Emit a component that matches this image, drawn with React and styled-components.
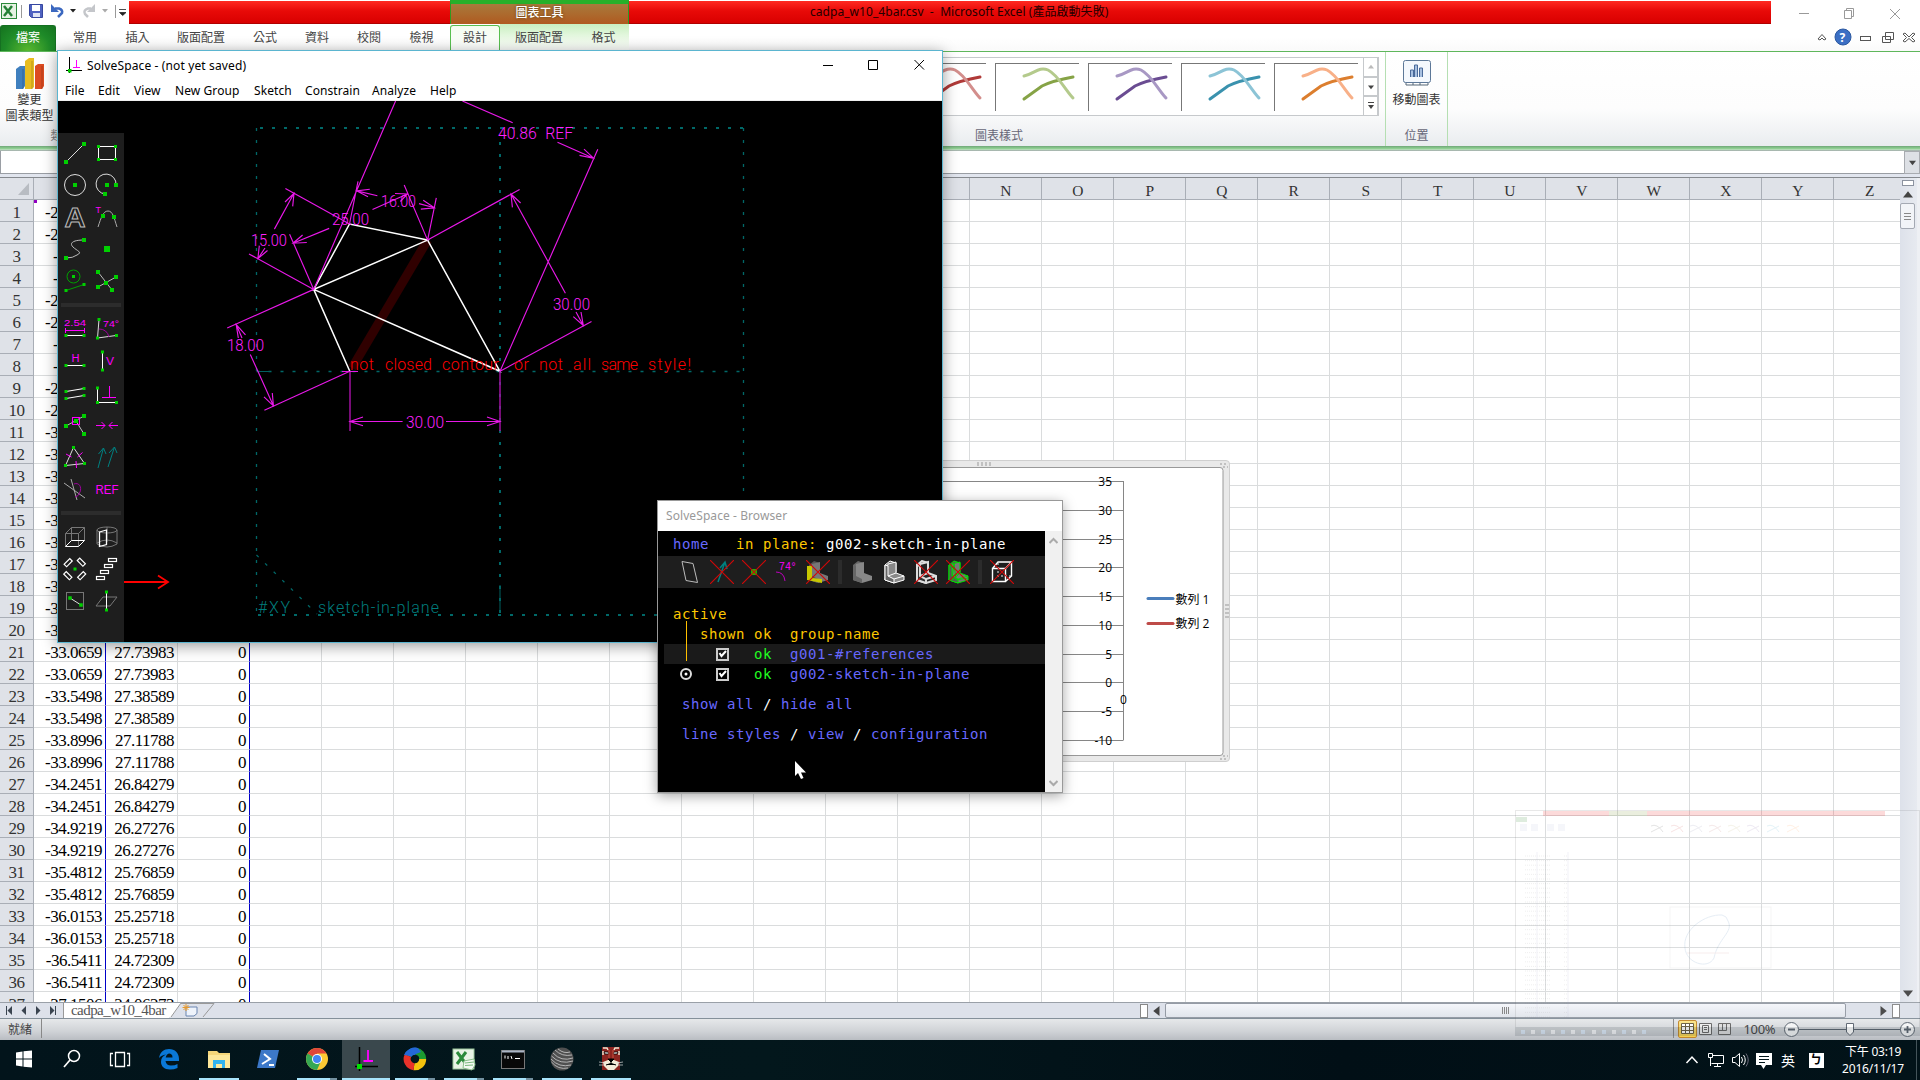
import React from 'react';
import styled, { createGlobalStyle, css } from 'styled-components';

const cjk = '"Noto Sans", "Noto Sans CJK TC", sans-serif';
const serif = '"Liberation Serif", "Noto Sans CJK TC", serif';
const mono = '"DejaVu Sans Mono", monospace';
const G = '#00d000';
const M = '#ff00ff';

const Global = createGlobalStyle`
  * { box-sizing: border-box; }
  html, body { margin: 0; background: #fff; overflow: hidden; }
  svg { display: block; flex: none; }
`;

const Desktop = styled.div`
  position: relative;
  width: 1920px;
  height: 1080px;
  overflow: hidden;
  display: flex;
  flex-direction: column;
  font-family: ${cjk};
  font-size: 12px;
  white-space: nowrap;
  background: #fff;
`;

/* ---------- Excel title and ribbon ---------- */
const TitleRow = styled.div`
  height: 24px;
  flex: none;
  display: flex;
  background: #fff;
`;
const Quick = styled.div`
  width: 129px;
  display: flex;
  align-items: center;
`;
const RedBar = styled.div`
  width: ${p => p.$w}px;
  margin-top: 1px;
  background: linear-gradient(#ff2a22, #e80a08 45%, #d90000);
  border-bottom: 1px solid #b00000;
  color: #240000;
  line-height: 22px;
  padding-left: ${p => p.$pad || 0}px;
  letter-spacing: 0.05px;
`;
const ToolsTab = styled.div`
  width: 179px;
  border-top: 4px solid #27b02a;
  border-left: 1px solid #2f9a20;
  border-right: 1px solid #2f9a20;
  background: linear-gradient(#a87a3c, #b05a20);
  color: #fff;
  font-weight: 500;
  text-align: center;
  line-height: 17px;
  text-shadow: 0 0 3px #5c3a10;
`;
const WinButtons = styled.div`
  flex: 1;
  display: flex;
  justify-content: flex-end;
  padding: 4px 19px 0 0;
`;
const TabRow = styled.div`
  height: 27px;
  flex: none;
  display: flex;
  color: #444;
  background: linear-gradient(#fff 50%, #fafafa);
`;
const FileTab = styled.div`
  width: 56px;
  margin-top: 1px;
  border-radius: 3px 3px 0 0;
  background: radial-gradient(ellipse at 50% 100%, #59b82f, #1e8a28 60%, #15731f);
  border: 1px solid #157021;
  border-bottom: 0;
  color: #fff;
  text-align: center;
  line-height: 24px;
`;
const Tab = styled.div`
  width: ${p => p.$w}px;
  text-align: center;
  line-height: 27px;
  ${p => p.$green && css`background: linear-gradient(#c9efc0, #eefaea 60%, #fff);`}
  ${p => p.$on && css`
    background: linear-gradient(#f4fcf0, #fff);
    border: 1px solid #58bf50;
    border-bottom: 0;
    border-radius: 3px 3px 0 0;
    margin-top: 1px;
    line-height: 24px;
  `}
`;
const TabTools = styled.div`
  flex: 1;
  display: flex;
  justify-content: flex-end;
  align-items: center;
  padding: 0 2px 2px 0;
`;
const Ribbon = styled.div`
  height: 95px;
  flex: none;
  display: flex;
  border-top: 1px solid #5fb75c;
  background: linear-gradient(#fff, #fdfdfd 60%, #e9ecef);
  color: #333;
`;
const Group = styled.div`
  width: ${p => p.$w}px;
  padding-top: ${p => p.$top}px;
  display: flex;
  flex-direction: column;
  align-items: ${p => p.$align || 'center'};
  ${p => p.$lines && css`
    border-left: 1px solid #b5dfb2;
    border-right: 1px solid #b5dfb2;
  `}
`;
const Label = styled.div`
  line-height: 16px;
  color: ${p => p.$c || '#333'};
  margin-top: ${p => p.$mt || 0}px;
  margin-left: ${p => p.$ml || 0}px;
`;
const Gallery = styled.div`
  width: 480px;
  height: 59px;
  margin-left: 840px;
  border: 1px solid #c6c9cc;
  background: #fff;
  display: flex;
  padding-top: 5px;
`;
const StyleItem = styled.div`
  width: 84px;
  height: 48px;
  margin-left: ${p => p.$ml}px;
  border-top: 1px solid #777;
  border-left: 1px solid #777;
`;
const GalleryScroll = styled.div`
  width: 15px;
  height: 59px;
  display: flex;
  flex-direction: column;
  margin: -6px 0 0 auto;
`;
const GalleryBtn = styled.div`
  flex: 1;
  border: 1px solid #c6c9cc;
  display: flex;
  align-items: center;
  justify-content: center;
`;
const GreenBand = styled.div`
  height: 5px;
  flex: none;
  background: linear-gradient(#6fa778, #8fcf92 50%, #c4dfc8 80%, #8b9096);
`;
const FormulaBar = styled.div`
  height: 27px;
  flex: none;
  background: #e1e5ee;
  border-bottom: 1px solid #85898e;
  display: flex;
  align-items: flex-start;
`;
const FormulaInput = styled.div`
  flex: 1;
  height: 23px;
  background: #fff;
  border-bottom: 1px solid #9a9ea4;
  border-left: 1px solid #9a9ea4;
`;
const FormulaDrop = styled.div`
  width: 16px;
  height: 23px;
  background: #dde0e5;
  border: 1px solid #a8abb0;
  display: flex;
  align-items: center;
  justify-content: center;
`;

/* ---------- worksheet ---------- */
const SheetArea = styled.div`
  height: 824px;
  flex: none;
  display: flex;
`;
const Sheet = styled.div`
  width: 1900px;
  overflow: hidden;
  font-family: ${serif};
  font-size: 17px;
  letter-spacing: -0.5px;
`;
const GridRow = styled.div`
  display: flex;
  width: 1906px;
  height: 22px;
`;
const Head = styled.div`
  width: ${p => (p.$corner ? 34 : 72)}px;
  flex: none;
  height: 22px;
  background: #dfe2e8;
  border-right: 1px solid #a9aeb6;
  border-bottom: 1px solid #a9aeb6;
  color: #333;
  text-align: center;
  font-size: 15.5px;
  line-height: 25px;
  ${p => p.$corner && css`
    display: flex;
    align-items: flex-end;
    justify-content: flex-end;
    padding: 0 4px 4px 0;
  `}
`;
const RowHead = styled(Head)`
  width: 34px;
  font-size: 17px;
`;
const Cell = styled.div`
  width: 72px;
  flex: none;
  height: 22px;
  padding-right: 3px;
  text-align: right;
  line-height: 25px;
  color: #000;
  border-right: 1px solid ${p => (p.$blue ? '#0000c8' : '#dadcdd')};
  border-bottom: 1px solid #dadcdd;
`;
const VScroll = styled.div`
  width: 20px;
  background: linear-gradient(90deg, #dde1ea, #e7eaf0);
  border-right: 3px solid #eef0f4;
  display: flex;
  flex-direction: column;
  align-items: center;
  padding: 2px 2px 4px 0;
`;
const SplitBox = styled.div`
  width: 12px;
  height: 6px;
  border: 1px solid #8c93a0;
  background: #fff;
`;
const VThumb = styled.div`
  width: 15px;
  height: 26px;
  margin-top: 3px;
  border: 1px solid #a4a9b3;
  border-radius: 2px;
  background: #f2f4f8;
  display: flex;
  align-items: center;
  justify-content: center;
`;
const VArrow = styled.div`
  margin-top: ${p => (p.$last ? 'auto' : '4px')};
`;
const SheetBar = styled.div`
  height: 17px;
  flex: none;
  display: flex;
  align-items: stretch;
  background: #dde1ea;
  border-top: 1px solid #9aa0a8;
  border-bottom: 1px solid #84909a;
`;
const SheetTab = styled.div`
  width: 106px;
  padding-left: 7px;
  background: #fff;
  font-family: ${serif};
  font-size: 15px;
  line-height: 14px;
  letter-spacing: -0.55px;
  color: #555;
  border-left: 1px solid #999;
`;
const HScroll = styled.div`
  margin-left: auto;
  width: 780px;
  display: flex;
  align-items: center;
`;
const HThumb = styled.div`
  width: 681px;
  height: 15px;
  border: 1px solid #959ba5;
  border-radius: 2px;
  background: linear-gradient(#f4f6fa, #e1e5ec);
  display: flex;
  justify-content: center;
  align-items: center;
`;
const HBox = styled.div`
  width: 8px;
  height: 14px;
  border: 1px solid #888;
  background: #fff;
`;
const Gap = styled.div`
  width: ${p => p.$w}px;
  display: flex;
  justify-content: ${p => (p.$end ? 'flex-end' : 'center')};
  padding-right: ${p => (p.$end ? 4 : 0)}px;
`;
const Status = styled.div`
  height: 21px;
  flex: none;
  display: flex;
  align-items: center;
  background: linear-gradient(#e6e8ea, #cfd2d6 60%, #b9bdc2);
  color: #444;
  padding: 0 0 2px 8px;
`;
const StatusSep = styled.div`
  width: 1px;
  height: 19px;
  background: #888;
  margin-left: ${p => p.$ml}px;
`;
const ViewBtn = styled.div`
  width: 19px;
  height: 18px;
  display: flex;
  align-items: center;
  justify-content: center;
  border: 1px solid ${p => (p.$on ? '#c2872a' : 'transparent')};
  border-radius: 2px;
  background: ${p => (p.$on ? 'linear-gradient(#fbe48a, #f3cf4e)' : 'none')};
`;
const Zoom = styled.div`
  width: 46px;
  text-align: center;
  font-size: 13px;
  letter-spacing: -0.3px;
`;

/* ---------- taskbar ---------- */
const Taskbar = styled.div`
  height: 40px;
  flex: none;
  display: flex;
  background: linear-gradient(90deg, #02141b, #03171c 40%, #010f16 70%, #021319);
  color: #fff;
`;
const TaskItem = styled.div`
  width: ${p => p.$w}px;
  height: 40px;
  margin-left: ${p => p.$ml || 0}px;
  display: flex;
  align-items: center;
  justify-content: center;
  border-bottom: 2px solid transparent;
  background: ${p => (p.$on ? '#3a484d' : 'none')};
  ${p => p.$run && css`border-image: linear-gradient(90deg, #a8e4fb ${p.$stack ? 80 : 100}%, #7391a0 0) 2;`}
`;
const Tray = styled.div`
  margin-left: auto;
  display: flex;
  align-items: center;
`;
const TrayItem = styled.div`
  width: 24px;
  display: flex;
  justify-content: center;
`;
const Clock = styled.div`
  width: 86px;
  margin-left: 2px;
  text-align: center;
  line-height: 17px;
  letter-spacing: -0.2px;
`;
const ImeMark = styled.span`
  font-size: 14px;
`;
const ImeBox = styled.div`
  width: 15px;
  height: 15px;
  background: #fff;
  color: #000;
  font-size: 12px;
  font-weight: 700;
  line-height: 14px;
  text-align: center;
`;
const ShowDesktop = styled.div`
  width: 4px;
  height: 40px;
  border-left: 1px solid #44545a;
`;

/* ---------- floating windows ---------- */
const SolveWindow = styled.div`
  position: absolute;
  left: 57px;
  top: 50px;
  width: 886px;
  height: 593px;
  border: 1px solid #5bb5d0;
  background: #fff;
  box-shadow: 0 3px 14px rgba(0, 0, 0, 0.4);
  color: #000;
`;
const SolveTitle = styled.div`
  height: 28px;
  display: flex;
  align-items: center;
  padding-left: 8px;
`;
const TitleText = styled.span`
  margin-left: 5px;
  letter-spacing: 0.13px;
`;
const SolveButtons = styled.div`
  margin-left: auto;
  padding-right: 17px;
`;
const Menu = styled.div`
  height: 22px;
  padding-left: 7px;
  display: flex;
  line-height: 24px;
  letter-spacing: 0.08px;
  border-bottom: 1px solid #f0f0f0;
`;
const MenuItem = styled.div`
  width: ${p => p.$w}px;
`;
const Canvas = styled.div`
  position: relative;
  height: 541px;
  background: #000;
`;
const Palette = styled.div`
  position: absolute;
  left: 0;
  top: 32px;
  width: 66px;
  height: 509px;
  background: #1e1e1e;
  padding: 4px 1px;
`;
const PaletteGrid = styled.div`
  display: grid;
  grid-template-columns: 32px 32px;
  grid-auto-rows: 32px;
  place-items: center;
`;
const PaletteSep = styled.div`
  height: 4px;
  margin: 6px 2px;
  background: #2c2c2c;
`;
const Browser = styled.div`
  position: absolute;
  left: 657px;
  top: 500px;
  width: 406px;
  height: 293px;
  border: 1px solid #999;
  background: #000;
  box-shadow: 0 3px 12px rgba(0, 0, 0, 0.35);
`;
const BrowserTitle = styled.div`
  height: 30px;
  background: #fff;
  color: #999;
  padding-left: 8px;
  line-height: 30px;
  letter-spacing: 0.08px;
`;
const BrowserBody = styled.div`
  height: 261px;
  display: flex;
`;
const BrowserText = styled.div`
  position: relative;
  width: 387px;
  font-family: ${mono};
  font-size: 14px;
  letter-spacing: 0.571px;
  color: #fff;
`;
const TextLine = styled.div`
  height: ${p => p.$h}px;
  line-height: ${p => p.$lh || p.$h}px;
  padding-left: 15px;
  white-space: pre;
  margin-top: ${p => p.$mt || 0}px;
`;
const GroupRow = styled.div`
  height: 20px;
  line-height: 20px;
  margin-left: 6px;
  padding-left: 9px;
  display: grid;
  grid-template-columns: 27px 54px 36px 1fr;
  align-items: center;
  background: ${p => (p.$band ? '#1a1a1a' : 'none')};
`;
const Ink = styled.span`
  color: ${p => p.$c};
`;
const BrowserTools = styled.div`
  height: 32px;
  background: #1e1e1e;
  display: flex;
  align-items: center;
  padding-left: 16px;
`;
const ToolCell = styled.div`
  width: 32px;
  display: flex;
  justify-content: center;
`;
const ToolSep = styled.div`
  width: 4px;
  height: 24px;
  margin: 0 4px;
  background: #2c2c2c;
`;
const ActiveLine = styled.div`
  position: absolute;
  left: 28px;
  top: 90px;
  width: 1px;
  height: 40px;
  background: #ffc000;
`;
const BrowserScroll = styled.div`
  width: 17px;
  background: #f0f0f0;
  display: flex;
  flex-direction: column;
  justify-content: space-between;
  align-items: center;
  padding: 6px 0 5px;
`;
const ChartFrame = styled.div`
  position: absolute;
  left: 880px;
  top: 460px;
  width: 350px;
  height: 302px;
  border: 1px solid #cfcfcf;
  border-radius: 4px;
  background: #e9e9e9;
  padding: 6px 5px 5px;
`;
const Overlay = styled.div`
  position: absolute;
  left: ${p => p.$x}px;
  top: ${p => p.$y}px;
  opacity: ${p => p.$o || 1};
`;

/* ---------- small drawings ---------- */
const Tri = ({ d = 'down', s = 6, c = '#444' }) => {
  const r = { down: 0, up: 180, left: 90, right: -90 }[d];
  return <svg width={s + 2} height={s + 2} viewBox="-4 -4 8 8"><path d="M-4-2H4L0 3Z" fill={c} transform={`rotate(${r})`} /></svg>;
};
const Chevron = ({ up, c = '#aaa' }) => (
  <svg width="9" height="7" viewBox="0 0 9 7" fill="none" stroke={c} strokeWidth="2"><path d={up ? 'M.5 6L4.500 2L8.500 6' : 'M.5 1L4.500 5L8.500 1'} /></svg>
);
const StylePreview = ({ a, b }) => (
  <svg width="82" height="46" fill="none" strokeWidth="3" strokeLinecap="round">
    <path d="M28 35L46 22C56 17 66 15 77 13" stroke={a} />
    <path d="M28 12C38 10 43 2 52 6C62 11 68 24 77 34" stroke={b} />
  </svg>
);

const D = ({ p, s = 3.6, c = G }) => p.map(([x, y], i) => <rect key={i} x={x - s / 2} y={y - s / 2} width={s} height={s} fill={c} stroke="none" />);
const Ico = ({ children }) => (
  <svg width="24" height="24" viewBox="0 0 24 24" fill="none" stroke="#ddd" strokeWidth="1" fontFamily="Liberation Sans">{children}</svg>
);
const T = ({ x, y, s, children, w }) => (
  <text x={x} y={y} fontSize={s} fill={M} stroke="none" textLength={w} lengthAdjust="spacingAndGlyphs">{children}</text>
);

const sketchTools = [
  <><path d="M3 21L21 3" /><D s={4} p={[[3, 21], [21, 3]]} /></>,
  <><rect x="3.500" y="5.500" width="17" height="13" stroke="#fff" /><D s={3} p={[[3.5, 5.5], [20.5, 5.5], [3.5, 18.5], [20.5, 18.5]]} /></>,
  <><circle cx="12" cy="12" r="10.500" /><D p={[[12, 12]]} s={4} /></>,
  <><path d="M21 12A10 10 0 1 0 10 21" /><D p={[[12, 12], [21, 12], [10, 21]]} s={4} /></>,
  <text x="1.500" y="22" fontSize="27" fontWeight="bold" textLength="21" lengthAdjust="spacingAndGlyphs" stroke="#bbb">A</text>,
  <><path d="M3 22C6 13 8 6 13 6S19 13 22 22" stroke="#aaa" /><T x="0.500" y="8" s="9">T</T><D p={[[8, 11], [19, 12]]} s={4} /></>,
  <><path d="M21 3C10 3 6 6 10 10S20 15 14 18Q10 21 3 21" stroke="#bbb" /><D s={4} p={[[21, 3], [3, 21]]} /></>,
  <D p={[[12, 12]]} s={6} />,
  <g stroke="#00a000"><circle cx="10.500" cy="7.500" r="6.500" /><path d="M3 21.500L21 15.500" /><D p={[[10.5, 7.5], [3, 21.5], [21, 15.5]]} s={3} /></g>,
  <><path d="M3 3L17 21M3 18L21 8" stroke="#bbb" /><D p={[[3, 3], [17, 21], [3, 18], [21, 8], [11, 14]]} s={4} /></>,
];
const constraintTools = [
  <><T x="1" y="9" s="9.500" w="22">2.54</T><path d="M2.500 13.500H21.500M2.500 11V16M21.500 11V16" stroke={M} /><path d="M3 18.500H21" stroke="#fff" /><D s={3} p={[[3, 18.5], [21, 18.5]]} /></>,
  <><path d="M4 2.500L2.500 21L21 18.500" /><path d="M4 12Q12 12 14 20" stroke="#a000a0" /><T x="8" y="10" s="9.500" w="16">74°</T><D s={3} p={[[4, 2.5], [2.5, 21], [21.5, 18.5]]} /></>,
  <><T x="8.500" y="13" s="10" w="8">H</T><path d="M3 16.500H21" stroke="#fff" /><D s={3} p={[[3, 16.5], [21, 16.5]]} /></>,
  <><path d="M7.500 3V21" stroke="#fff" /><T x="11" y="16" s="11" w="8">V</T><D s={3} p={[[7.5, 3], [7.5, 21]]} /></>,
  <><path d="M3 10.500L21 7.500M3 17.500L21 14.500" stroke="#fff" /><D s={3} p={[[3, 10.5], [21, 7.5], [3, 17.5], [21, 14.5]]} /></>,
  <><path d="M2.500 7V21.500H21" stroke="#fff" /><path d="M14.500 5V16.500M7 16.500H21" stroke={M} /><D s={3} p={[[2.5, 7], [2.5, 21.5], [21.5, 21.5]]} /></>,
  <><path d="M3 13L21 3M13 8L21 21" stroke="#bbb" /><D s={4} p={[[3, 13], [21, 3], [21, 21], [13, 8]]} /><rect x="9.500" y="4.500" width="7" height="7" stroke={M} /></>,
  <path d="M1 12.500H10M6.500 9L10 12.500L6.500 16M23 12.500H14M17.500 9L14 12.500L17.500 16" stroke={M} />,
  <><path d="M10.500 2.500L2.500 20.500L21.500 18.500Z" /><path d="M3 9L8.500 12M14.500 12L19.500 7.500M13 16L13.500 23" stroke={M} /><D s={3} p={[[10.5, 2.5], [2.5, 20.5], [21.5, 18.5]]} /></>,
  <path d="M3 23L8.500 3M3.500 9L8.500 3L11 9M13 22L19.500 2M14 8L19.500 2L22 8" stroke="#008080" />,
  <><path d="M1 6L22 21M8 2L14 23" stroke="#aaa" /><path d="M11 7C16 5 19 10 17 15Q15 20 12 20" stroke="#a000a0" /></>,
  <T x="0.500" y="16.500" s="12.500" w="23">REF</T>,
];
const groupTools = [
  <><path d="M2.500 21.500V8.500L8.500 2.500H21.500V15.500M2.500 8.500H15.500L21.500 2.500M15.500 8.500V21.500M8.500 2.500V15.500" stroke="#777" /><path d="M2.500 21.500H15.500L21.500 15.500H8.500Z" stroke="#fff" /></>,
  <><ellipse cx="12" cy="5" rx="10" ry="3" stroke="#777" /><path d="M2 5V19Q12 25 22 19V5M2 18Q12 12 22 18M12 2V17" stroke="#777" /><path d="M4.500 7L11.500 5V19.500L4.500 21.500Z" stroke="#fff" strokeWidth="1.300" /></>,
  <g stroke="#fff" strokeWidth="1.200"><rect x="-4" y="-1.500" width="8" height="3.500" transform="translate(5,5.500) rotate(-45)" /><rect x="-4" y="-1.500" width="8" height="3.500" transform="translate(18.500,5) rotate(45)" /><rect x="-4" y="-1.500" width="8" height="3.500" transform="translate(5,18.500) rotate(45)" /><rect x="-4" y="-1.500" width="8" height="3.500" transform="translate(18.500,18.500) rotate(-45)" /><D p={[[12, 12]]} s={3} /></g>,
  <g stroke="#fff" strokeWidth="1.200"><rect x="13.500" y="1.500" width="8" height="3" /><rect x="9.500" y="7.500" width="8" height="3" /><rect x="5.500" y="13.500" width="8" height="3" /><rect x="1.500" y="19.500" width="8" height="3" /></g>,
  <><rect x="3.500" y="3.500" width="17" height="17" stroke="#777" /><path d="M7 9L18 16" /><D s={3.5} p={[[7, 9], [18, 16]]} /></>,
  <><path d="M1 17L8 8H22L15 17Z" stroke="#777" /><path d="M11.500 2V22" stroke="#fff" /><D s={3} p={[[11.5, 3], [11.5, 21]]} /></>,
];

const Strike = () => <path d="M0 0L24 24M24 0L0 24" stroke="#d00808" strokeWidth="1.150" />;
const Solid = ({ l, d, o = 'none' }) => (
  <><path d="M3 5L8 1L14 3V12L10 15L3 20Z" fill={d} stroke={o} /><path d="M6 4L14 2V13L22 16V20L12 23L3 20Z" fill={l} stroke={o} /><path d="M3 5L6 6V16L12 19V23L3 20Z" fill={d} stroke={o} /><path d="M12 19L22 16M6 16L14 13" stroke={o} /></>
);
const viewTools = [
  <path d="M4 1.500L15 3.500L19.500 22.500L8 20.500Z" stroke="#bbb" />,
  <><path d="M8 22L15 2M10 8L15 2L17 9" stroke="#008080" strokeWidth="1.500" /><Strike /></>,
  <><D p={[[12, 12]]} s={6} c="#20b000" /><Strike /></>,
  <><T x="5" y="10" s="10.500" w="17">74°</T><path d="M2 12Q10 12 11 21" stroke="#c000c0" /></>,
  <><Solid l="#777" d="#555" /><path d="M1 6H6V18L16 19V23L1 20Z" fill="#c8c800" stroke="none" /><Strike /></>,
  null,
  <Solid l="#888" d="#666" />,
  <Solid l="#888" d="#666" o="#fff" />,
  <><g strokeWidth="2"><Solid l="#222" d="#333" o="#ddd" /></g><Strike /></>,
  <><Solid l="#777" d="#555" o="#00e000" /><path d="M3 5L14 13L6 20L8 3L10 20L22 18" stroke="#00d000" /><Strike /></>,
  null,
  <><path d="M2.500 8.500H15.500V21.500H2.500ZM2.500 8.500L8 2H21.500L15.500 8.500M21.500 2V16L15.500 21.500" stroke="#fff" strokeWidth="1.400" /><path d="M8 3V16H21M8 16L3 21" stroke="#eee" strokeDasharray="2 2" /><Strike /></>,
];

/* ---------- sketch canvas ---------- */
const dims = `M313.700 289.400L395.600 101M462.400 101L512.700 122.700M557.500 142.300L593.600 158.200M579.500 155.400L593.600 158.200L584 149.200M597.800 149.200L500 371.300
M358 181.300L349.500 224M356.700 190.900L377.400 195.700M369.800 189.200L356.700 190.900L368 196.700M419 203.600L434.500 207.800M423.200 200.200L434.500 207.800L420.800 209.100M436.300 197.800L427.600 240.100
M404.200 185L427.600 240.100M407.300 194L372.500 209.500M395 193.500L407.300 194L400.400 201.500M329.200 228.400L293 243.200M302.600 235L293 243.200L306.800 242.500M289.600 234.300L313.700 289.400
M285.400 188.500L349.500 224M294 193.300L274.400 229.100M285 202L294 193.300L292.700 206.400M265 248L257.900 258.700M259.300 245.600L257.900 258.700L267.500 250.500M249 253.900L313.700 289.400
M227.200 328L313.700 289.400M236.200 324.500L242 338M238.300 338L236.200 324.500L245.500 334.800M250.300 354.500L273.400 405.800M264 396.800L273.400 405.800L272.300 393M264.400 410.200L349.800 371.300
M427.600 240.100L519.600 189.500M511 194L565.400 293.200M512.400 207.400L511 194L520.600 203M576 312L583.300 325.500M573.300 316.600L583.300 325.500L581 312M591.500 321.400L500 371.300
M350 421.500H402.600M446 421.500H500M363 417L350 421.500L363 425.700M487 417L500 421.500L487 425.700M342 371.500H358`;

const CadText = styled.text`
  font-family: "Roboto", "DejaVu Sans", sans-serif;
  font-weight: 300;
  font-size: 17px;
  word-spacing: 5px;
  fill: #ff20ff;
`;
const CadNote = styled.text`
  font-family: "Roboto", "DejaVu Sans", sans-serif;
  font-weight: 300;
  font-size: 16px;
  fill: ${p => p.$c};
`;
const cadLabels = [
  ['40.86 REF', 498, 138.5, 75], ['16.00', 381, 206.5, 35], ['25.00', 332, 225, 37], ['15.00', 251, 245.5, 36],
  ['18.00', 227, 350.5, 37], ['30.00', 553, 310, 37], ['30.00', 406, 427.5, 38],
];
const note = [['not', 350, 24], ['closed', 385, 47], ['contour', 442, 57], ['or', 514, 15], ['not', 539, 24], ['all', 573, 18], ['same', 601, 37], ['style!', 648, 43]];
const SketchView = () => (
  <svg width="884" height="541" viewBox="58 101 884 541" fill="none">
    <g stroke="#006868" strokeWidth="1.300" strokeDasharray="3 9">
      <path d="M260 128H743" strokeDasharray="3 9" strokeWidth="2" /><path d="M256.500 128V615M743.500 128V615M256.500 371.500H743.500" />
      <path d="M500 142V614M258 615H743" strokeWidth="2" /><path d="M256.500 555L317 614" />
    </g>
    <path d="M258 371.500H270M500 585V612" stroke="#006060" />
    <path d="M427.600 240L352 368" stroke="#300000" strokeWidth="9" />
    <path d="M313.700 289.400L349.500 224L427.600 240.100ZL349.800 371.300M313.700 289.400L500 371.300L427.600 240.100" stroke="#fff" strokeWidth="1.500" />
    <path d="M350 371V431M500 371V431" stroke="#a010a0" strokeWidth="1.500" />
    <path d={dims} stroke="#e818e8" strokeWidth="1.150" />
    {cadLabels.map(([t, x, y, w], i) => <CadText key={i} x={x} y={y} textLength={w} lengthAdjust="spacingAndGlyphs">{t}</CadText>)}
    {note.map(([t, x, w]) => <CadNote key={x} x={x} y="370" textLength={w} $c="#ff0000">{t}</CadNote>)}
    <CadNote x="258" y="613" $c="#007c7c" textLength="32">#XY</CadNote>
    <CadNote x="318" y="613" $c="#007c7c" textLength="121">sketch-in-plane</CadNote>
    <path d="M124 582H167M158 575.500L168 582L158 588.500" stroke="#ff0000" strokeWidth="1.800" />
  </svg>
);

/* ---------- chart ---------- */
const ticks = [35, 30, 25, 20, 15, 10, 5, 0, -5, -10];
const Chart = () => (
  <svg width="338" height="289" viewBox="886 467 338 289" fontFamily="Open Sans, Noto Sans CJK TC" fontSize="12">
    <rect x="880" y="467.500" width="343" height="288" rx="3" fill="#fff" stroke="#999" />
    {ticks.map((t, i) => (
      <g key={t}>
        <path d={`M890 ${Math.round(481 + i * 28.75) + 0.5}H1123`} stroke="#868686" />
        <text x="1112" y={486 + i * 28.75} textAnchor="end">{t}</text>
      </g>
    ))}
    <path d="M1123.500 481V740.500" stroke="#868686" />
    <text x="1120" y="704">0</text>
    <g strokeWidth="3" strokeLinecap="round"><path d="M1148 598.500H1173" stroke="#4a7ebb" /><path d="M1148 623.500H1173" stroke="#be4b48" /></g>
    <text x="1175.500" y="603.500">數列 1</text><text x="1175.500" y="627.500">數列 2</text>
  </svg>
);

const GhostPreview = () => (
  <svg width="405" height="226" fill="none">
    <rect x=".5" y=".5" width="404" height="225" stroke="#666" fill="#fff" fillOpacity=".3" />
    <rect x="28" y="1" width="342" height="5" fill="#f00000" /><rect x="94" y="1" width="38" height="5" fill="#709020" />
    <rect x="1" y="7" width="11" height="5" fill="#208020" />
    {[5, 16, 32, 43].map(x => <rect key={x} x={x} y="14" width="7" height="7" fill="#bcc4dd" />)}
    {[140, 160, 179, 198, 217, 236, 256, 276].map((x, i) => <path key={x} d={`M${x - 4} 22L${x + 8} 16M${x - 4} 16Q${x + 2} 13 ${x + 8} 22`} stroke={['#444', '#c44', '#88a', '#b66', '#ba6', '#86a', '#4ac', '#f94'][i]} />)}
    <g stroke="#999" strokeDasharray="1 1">{Array.from({ length: 36 }, (_, i) => <path key={i} d={`M10 ${46 + i * 4.6}H36M49 ${46 + i * 4.6}H53`} />)}</g>
    <path d="M22 42V208M53 42V208" stroke="#aac" />
    <rect x="155" y="97" width="101" height="61" stroke="#bbb" />
    <path d="M213 111C219 122 203 128 199 148C193 160 171 153 170 138C167 120 190 104 207 105Q212 106 213 111Z" stroke="#58b" />
    <path d="M172 143H214" stroke="#c88" />
    <rect x="0" y="217" width="405" height="9" fill="#223038" />
    {[6, 16, 26, 36, 46, 56, 66, 77, 87, 97, 107, 117, 127].map((x, i) => <rect key={x} x={x} y="220" width="4" height="4" fill={i % 2 ? '#fff' : '#7bf'} />)}
  </svg>
);

/* ---------- data ---------- */
const sheetRows = [
  ['-29.2057', '29.99983'], ['-29.2057', '29.99983'], ['-29.236', '29.91053'], ['-29.236', '29.91053'], ['-29.4103', '29.81052'], ['-29.4103', '29.81052'],
  ['-29.701', '29.70706'], ['-29.701', '29.70706'], ['-29.9059', '29.50084'], ['-29.9059', '29.50084'], ['-31.0935', '29.24107'], ['-31.0935', '29.24107'],
  ['-31.3365', '28.95176'], ['-31.3365', '28.95176'], ['-31.7047', '28.67025'], ['-31.7047', '28.67025'], ['-32.1936', '28.35975'], ['-32.1936', '28.35975'],
  ['-32.6092', '28.07003'], ['-32.6092', '28.07003'], ['-33.0659', '27.73983'], ['-33.0659', '27.73983'], ['-33.5498', '27.38589'], ['-33.5498', '27.38589'],
  ['-33.8996', '27.11788'], ['-33.8996', '27.11788'], ['-34.2451', '26.84279'], ['-34.2451', '26.84279'], ['-34.9219', '26.27276'], ['-34.9219', '26.27276'],
  ['-35.4812', '25.76859'], ['-35.4812', '25.76859'], ['-36.0153', '25.25718'], ['-36.0153', '25.25718'], ['-36.5411', '24.72309'], ['-36.5411', '24.72309'],
  ['-37.1506', '24.06273'],
];
const letters = 'ABCDEFGHIJKLMNOPQRSTUVWXYZ'.split('');
const previews = [['#b03a38', '#d38e8c'], ['#86a346', '#b4ca8c'], ['#6a4c92', '#a898c4'], ['#3a92ae', '#8cc4d6'], ['#dc7e2e', '#f8b088']];
const menu = [['File', 33], ['Edit', 36], ['View', 41], ['New Group', 79], ['Sketch', 51], ['Constrain', 67], ['Analyze', 58], ['Help', 40]];

const Pic = ({ children, h = 24 }) => <svg width="24" height={h} viewBox={`0 0 24 ${h}`} fill="none">{children}</svg>;
const apps = [
  { w: 48, icon: <Pic><path d="M4 5.500L10.500 4.500V11.500H4ZM11.500 4.300L20 3.500V11.500H11.500ZM4 12.500H10.500V19.500L4 18.500ZM11.500 12.500H20V20.500L11.500 19.700Z" fill="#fff" /></Pic> },
  { w: 48, icon: <Pic><circle cx="14" cy="9" r="5.500" stroke="#fff" strokeWidth="1.500" /><path d="M10 13L4 20" stroke="#fff" strokeWidth="1.700" /></Pic> },
  { w: 48, icon: <Pic><path d="M7.500 5.500H16.500V19.500H7.500ZM5 6.500H2.500V18.500H5M19 6.500H21.500V18.500H19" stroke="#fff" strokeWidth="1.300" /></Pic> },
  { w: 50, icon: <Pic><path d="M2 11C3 5 7 2 12 2C18 2 22 6 22 12V14H8.500C9 17 11 18.500 14 18.500Q18 18.500 20.500 17V21Q17 22.500 13 22.500C7 22.500 4 19 4 15C4 11 6 9 9 7.500C6 8 3.500 9 2 11ZM8.700 10.500H15.500C15.500 7.500 14 6.500 12 6.500Q9.500 7 8.700 10.500Z" fill="#0a78d7" /></Pic> },
  { w: 40, run: 1, ml: 5, icon: <Pic><path d="M1 4H10L12 6H23V21H1Z" fill="#f5d67a" /><path d="M1 8H23V21H1Z" fill="#fde79a" /><path d="M6 21V13H18V21H15V17H9V21Z" fill="#31b2ee" /></Pic> },
  { w: 58, icon: <Pic><path d="M5 3H23L19 21H1Z" fill="#3c78c8" /><path d="M8 7L14 12L6 17M13 18H18" stroke="#fff" strokeWidth="2" /></Pic> },
  { w: 40, run: 1, stack: 1, icon: <Pic><circle cx="12" cy="12" r="11" fill="#fcc934" /><path d="M12 12L2.500 6.500A11 11 0 0 1 21.500 6.500H12Z" fill="#e0463a" /><path d="M12 12L2.500 6.500A11 11 0 0 0 12 23L16 14Z" fill="#35a853" /><circle cx="12" cy="12" r="5" fill="#fff" /><circle cx="12" cy="12" r="4" fill="#4285f4" /></Pic> },
  { w: 48, run: 1, on: 1, ml: 5, icon: <Pic><path d="M5.500 0V24M1 19.500H24" stroke="#000" strokeWidth="1.500" /><path d="M14 3V14M9.500 14H19" stroke={M} strokeWidth="1.800" /><rect x="3" y="17" width="5" height="5" fill="#00e000" /></Pic> },
  { w: 40, run: 1, stack: 1, ml: 5, icon: <Pic><g strokeWidth="7"><path d="M5 8.500A7.700 7.700 0 0 1 13 4.300" stroke="#2b8be0" /><path d="M13 4.300A7.700 7.700 0 0 1 19.700 12" stroke="#1c9a30" /><path d="M19.700 12A7.700 7.700 0 0 1 11 19.700" stroke="#f4c20d" /><path d="M11 19.700A7.700 7.700 0 0 1 5 8.500" stroke="#e8322a" /></g><path d="M1 8A12 12 0 0 1 15 1L18 5L8 9Z" fill="#2468d8" /></Pic> },
  { w: 40, run: 1, stack: 1, ml: 9, icon: <Pic><rect x="1" y="2" width="21" height="20" fill="#e9f3e5" stroke="#9cc89c" /><path d="M5 5L14 17M14 5L5 17" stroke="#2c8a3b" strokeWidth="3" /><path d="M12 14L22 12L23 18L20 23L11 21Z" fill="#f4faf2" stroke="#8cc08c" /><path d="M13 16L22 15M13 18.500L21 18" stroke="#7ab87c" /></Pic> },
  { w: 40, run: 1, stack: 1, ml: 9, icon: <Pic><rect x=".5" y="3.500" width="23" height="18" fill="#080808" stroke="#777" /><path d="M1 4.500H23" stroke="#aab4c4" strokeWidth="2" /><path d="M4 8.500V11.500M7 9V12M10 9L11 12M14 11.500H19" stroke="#fff" /></Pic> },
  { w: 40, run: 1, ml: 9, icon: <Pic><circle cx="12" cy="12" r="11.500" fill="#505050" /><g stroke="#b4b4b4"><path d="M5 3Q12 10 22 8M3 6Q11 15 23 11M1.500 9Q10 18 23 14M1 12Q9 21 21 18M8 2Q14 7 20 5M1.500 15Q8 23 18 21" /></g></Pic> },
  { w: 40, run: 1, ml: 9, icon: <Pic h={26}><rect x="3" y="1" width="18" height="23" fill="#8c2420" /><path d="M4 2H8L9 4M20 2H16L15 4M4 5V9M20 5V9" stroke="#f0e4d0" strokeWidth="1.500" /><path d="M5 6H9L10 8H6ZM15 6H19L18 8H14Z" fill="#fff" stroke="#000" strokeWidth=".8" /><path d="M10 4V14M14 4V14" stroke="#c85040" /><path d="M4 16L9 14H15L20 16L19 20L15 24H9L5 20Z" fill="#f4ead8" /><path d="M9 13H15L12 16ZM12 16V18M7 19Q12 16 17 19" fill="#000" stroke="#000" /><path d="M0 16L6 17M24 16L18 17M0 19H5M24 19H19" stroke="#ddd" strokeWidth=".7" /></Pic> },
];

export default function App() {
  return (
    <Desktop>
      <Global />
      <TitleRow>
        <Quick>
          <svg width="129" height="24" fill="none">
            <rect x="1.500" y="3.500" width="15" height="15" fill="#e6f2e3" stroke="#2c8a3b" /><path d="M4 6L12 16M12 6L4 16" stroke="#248035" strokeWidth="2.500" />
            <path d="M21.500 5V18M115.500 5V18" stroke="#999" />
            <path d="M29.500 4.500H42.500V17.500H31.500L29.500 15.500Z" fill="#4f62c0" stroke="#3647a0" /><rect x="32" y="5" width="8" height="6" fill="#fff" /><rect x="33" y="13" width="7" height="4" fill="#dfe4f4" />
            <path d="M55 8.500H59Q63 10 62 13L58 17" stroke="#3b68c0" strokeWidth="2.500" /><path d="M51 4V12H59Z" fill="#3b68c0" />
            <path d="M70 9H76L73 12.500Z" fill="#222" />
            <path d="M91 8.500H88Q83 10 85 14L88 17" stroke="#c4c6ca" strokeWidth="2.500" /><path d="M95 4V12H87Z" fill="#c4c6ca" />
            <path d="M102 9H108L105 12.500Z" fill="#aaa" /><path d="M119 9.500H126M119.500 12.500H126L122.700 15.500Z" stroke="#222" fill="#222" strokeWidth=".8" />
          </svg>
        </Quick>
        <RedBar $w={321} />
        <ToolsTab>圖表工具</ToolsTab>
        <RedBar $w={1142} $pad={181}>cadpa_w10_4bar.csv&nbsp; -&nbsp; Microsoft Excel (產品啟動失敗)</RedBar>
        <WinButtons>
          <svg width="110" height="18" fill="none" stroke="#999"><path d="M8 9.500H18M53.500 6.500H60.500V14.500H53.500ZM55.500 6V4.500H62.500V12.500H61M99 5L109 15M109 5L99 15" /></svg>
        </WinButtons>
      </TitleRow>
      <TabRow>
        <FileTab>檔案</FileTab>
        <Tab $w={58}>常用</Tab><Tab $w={47}>插入</Tab><Tab $w={80}>版面配置</Tab><Tab $w={48}>公式</Tab><Tab $w={56}>資料</Tab>
        <Tab $w={48}>校閱</Tab><Tab $w={57}>檢視</Tab>
        <Tab $w={50} $on>設計</Tab><Tab $w={78} $green>版面配置</Tab><Tab $w={51} $green>格式</Tab>
        <TabTools>
          <svg width="102" height="20" fill="none" stroke="#555">
            <path d="M2 12L6 7.500L10 12L8 13L6 11L4 13Z" /><circle cx="27" cy="10" r="8" fill="#3b6fc4" stroke="#2b58a0" />
            <text x="23.500" y="14.500" fontSize="12" fontWeight="bold" fill="#fff" stroke="none">?</text>
            <rect x="44.500" y="9.500" width="10" height="4" /><path d="M69.500 5.500H77.500V12.500H69.500ZM66.500 9.500H74.500V15.500H66.500Z" /><path d="M89 6L93 10L97 6L99 7L95.500 10.500L99 14L97 15L93 11.500L89 15L87 14L90.500 10.500L87 7Z" />
          </svg>
        </TabTools>
      </TabRow>
      <Ribbon>
        <Group $w={59} $top={6}>
          <svg width="30" height="32"><path d="M1 11L5 8H10V28L8 31H1Z" fill="#3f7fbe" /><path d="M10 3L14 0H19V29L17 31H10Z" fill="#e8bd20" /><path d="M20 8L23 6H29V28L27 31H20Z" fill="#dc4c22" /><path d="M8 11V31M17 3V31M27 8V31" stroke="#0003" /></svg>
          <Label $mt={2}>變更</Label><Label>圖表類型</Label><Label $c="#777" $ml={66} $mt={4}>類型</Label>
        </Group>
        <Group $w={1326} $top={5} $align="flex-start">
          <Gallery>
            {previews.map(([a, b], i) => <StyleItem key={a} $ml={i ? 9 : 2}><StylePreview a={a} b={b} /></StyleItem>)}
            <GalleryScroll>
              <GalleryBtn><Tri d="up" s={4} c="#bbb" /></GalleryBtn><GalleryBtn><Tri s={4} /></GalleryBtn>
              <GalleryBtn><svg width="8" height="8"><path d="M1 .5H7" stroke="#444" /><path d="M1 3H7L4 7Z" fill="#444" /></svg></GalleryBtn>
            </GalleryScroll>
          </Gallery>
          <Label $c="#667" $mt={12} $ml={916}>圖表樣式</Label>
        </Group>
        <Group $w={63} $top={8} $lines>
          <svg width="30" height="28" fill="none"><path d="M4 22V25H26V22M11 25V22M18 25V22" stroke="#567" /><rect x="1.500" y=".5" width="27" height="22" rx="2" fill="#f4f8fd" stroke="#5d7898" /><path d="M8.500 17V10H11.500V17M12.500 17V5H15.500V17M17.500 17V8H20.500V17" fill="#a8c0e0" stroke="#4a6a9a" /></svg>
          <Label $mt={4}>移動圖表</Label><Label $c="#667" $mt={20}>位置</Label>
        </Group>
      </Ribbon>
      <GreenBand />
      <FormulaBar><FormulaInput /><FormulaDrop><Tri s={5} /></FormulaDrop></FormulaBar>
      <SheetArea>
        <Sheet>
          <GridRow>
            <Head $corner><svg width="11" height="12"><path d="M11 0V12H0Z" fill="#b8bcc2" /></svg></Head>
            {letters.map(l => <Head key={l}>{l}</Head>)}
          </GridRow>
          {sheetRows.map((r, i) => (
            <GridRow key={i}>
              <RowHead>{i + 1}</RowHead>
              {letters.map((l, c) => <Cell key={l} $blue={c === 0 || c === 2}>{c < 2 ? r[c] : c === 2 ? '0' : ''}</Cell>)}
            </GridRow>
          ))}
        </Sheet>
        <VScroll>
          <SplitBox /><VArrow><Tri d="up" s={8} /></VArrow><VThumb><svg width="7" height="7" stroke="#888"><path d="M0 .5H7M0 3.500H7M0 6.500H7" /></svg></VThumb>
          <VArrow $last><Tri s={8} /></VArrow>
        </VScroll>
      </SheetArea>
      <SheetBar>
        <svg width="63" height="15" fill="#3a4450"><path d="M6 3H7V12H6ZM12 3V12L7.500 7.500ZM26 3V12L21.500 7.500ZM36 3V12L40.500 7.500ZM50 3V12L54.500 7.500ZM55 3H56V12H55Z" /></svg>
        <SheetTab>cadpa_w10_4bar</SheetTab>
        <svg width="50" height="15" fill="none"><path d="M0 0H12L2 14H0Z" fill="#fff" /><path d="M12 0L2 14M12 .5H45L34 14" stroke="#999" /><path d="M17 4H28V10.500L25 13H17Z" fill="#eef3fb" stroke="#6a85b0" /><path d="M17 1V8M13.500 4.500H20.500M14.500 2L19.500 7M19.500 2L14.500 7" stroke="#e89a2c" /></svg>
        <HScroll>
          <HBox /><Gap $w={17}><Tri d="left" s={8} /></Gap>
          <HThumb><svg width="8" height="7" stroke="#888"><path d="M.5 0V7M2.500 0V7M4.500 0V7M6.500 0V7" /></svg></HThumb>
          <Gap $w={46} $end><Tri d="right" s={8} /></Gap><HBox />
        </HScroll>
      </SheetBar>
      <Status>
        就緒<StatusSep $ml={9} /><StatusSep $ml={1631} />
        <Gap $w={4} />
        <ViewBtn $on><svg width="13" height="11" fill="#fff" stroke="#665c40"><path d="M.5 .5H12.500V10.500H.5ZM.5 3.500H12.500M.5 7.500H12.500M4.500 .5V10.500M8.500 .5V10.500" /></svg></ViewBtn>
        <ViewBtn><svg width="13" height="12" fill="#eee" stroke="#666"><path d="M.5 .5H12.500V11.500H.5ZM3.500 2.500H9.500V9.500H3.500ZM5 4.500H8M5 6.500H8" /></svg></ViewBtn>
        <ViewBtn><svg width="13" height="12" fill="#ddd" stroke="#666"><path d="M.5 .5H12.500V11.500H.5ZM.5 7.500H8.500V.5M4.500 .5V7" /></svg></ViewBtn>
        <Gap $w={3} /><Zoom>100%</Zoom>
        <svg width="138" height="20" fill="none" stroke="#5c6570"><path d="M17 10.500H125" /><circle cx="9.500" cy="10.500" r="7" fill="#f4f5f6" /><circle cx="125.500" cy="10.500" r="7" fill="#f4f5f6" /><path d="M6 10.500H13M122 10.500H129M125.500 7V14" strokeWidth="1.800" /><path d="M64.500 4.500H71.500V13L68 16.500L64.500 13Z" fill="#fff" /></svg>
      </Status>
      <Taskbar>
        {apps.map((a, i) => <TaskItem key={i} $ml={a.ml} $w={a.w} $run={a.run} $stack={a.stack} $on={a.on}>{a.icon}</TaskItem>)}
        <Tray>
          <TrayItem><svg width="14" height="10" fill="none" stroke="#fff" strokeWidth="1.500"><path d="M1.500 8L7 2L12.500 8" /></svg></TrayItem>
          <TrayItem><svg width="18" height="16" fill="none" stroke="#fff"><path d="M5.500 3.500H16.500V11.500H4.500M10.500 11.500V14M7 14.500H14M1.500 1.500H5.500V5.500H1.500ZM3.500 6V14" /></svg></TrayItem>
          <TrayItem><svg width="18" height="16" fill="none" stroke="#fff"><path d="M1.500 5.500H4L8.500 1.500V14.500L4 10.500H1.500Z" /><path d="M10.500 5Q12.500 8 10.500 11M12.500 3Q16 8 12.500 13" /><path d="M15 1.500Q19.500 8 15 14.500" stroke="#667" /></svg></TrayItem>
          <TrayItem><svg width="16" height="17"><path d="M0 1H16V13H10L7.500 17L5 13H0Z" fill="#fff" /><path d="M3 4.500H13M3 7.500H13M3 10.500H9" stroke="#03171c" /></svg></TrayItem>
          <TrayItem><ImeMark>英</ImeMark></TrayItem>
          <Gap $w={4} />
          <TrayItem><ImeBox>ㄅ</ImeBox></TrayItem>
          <Clock><div>下午 03:19</div><div>2016/11/17</div></Clock>
          <ShowDesktop />
        </Tray>
      </Taskbar>

      <ChartFrame>
        <Chart />
      </ChartFrame>
      <Overlay $x={976} $y={461}>
        <svg width="254" height="302" stroke="#999" fill="none"><path d="M1 2H16M1 4H16" strokeDasharray="2 2" /><path d="M250 143V157M252 143V157M244 3H252M247 6H252M244 298H252M247 295H252" strokeDasharray="2 2" /></svg>
      </Overlay>
      <Overlay $x={1515} $y={810} $o={0.14}><GhostPreview /></Overlay>
      <Overlay $x={34} $y={200}><svg width="3" height="3"><rect width="3" height="3" fill="#9000c0" /></svg></Overlay>

      <SolveWindow>
        <SolveTitle>
          <svg width="16" height="18" fill="none"><path d="M3.500 1V17M0 14.500H16" stroke="#000" /><path d="M10.500 4V11M7 11.500H14" stroke={M} /><rect x="2" y="13" width="3.500" height="3.500" fill={G} /></svg>
          <TitleText>SolveSpace - (not yet saved)</TitleText>
          <SolveButtons>
            <svg width="102" height="12" fill="none" stroke="#000"><path d="M0 6.500H10M45.500 1.500H54.500V10.500H45.500ZM91.500 1L101 10.500M101 1L91.500 10.500" /></svg>
          </SolveButtons>
        </SolveTitle>
        <Menu>{menu.map(([t, w]) => <MenuItem key={t} $w={w}>{t}</MenuItem>)}</Menu>
        <Canvas>
          <SketchView />
          <Palette>
            <PaletteGrid>{sketchTools.map((t, i) => <Ico key={i}>{t}</Ico>)}</PaletteGrid>
            <PaletteSep />
            <PaletteGrid>{constraintTools.map((t, i) => <Ico key={i}>{t}</Ico>)}</PaletteGrid>
            <PaletteSep />
            <PaletteGrid>{groupTools.map((t, i) => <Ico key={i}>{t}</Ico>)}</PaletteGrid>
          </Palette>
        </Canvas>
      </SolveWindow>

      <Browser>
        <BrowserTitle>SolveSpace - Browser</BrowserTitle>
        <BrowserBody>
          <BrowserText>
            <TextLine $h={25} $lh={27}><Ink $c="#6868ff">home</Ink>{'   '}<Ink $c="#ffc800">in plane:</Ink>{' g002-sketch-in-plane'}</TextLine>
            <BrowserTools>{viewTools.map((t, i) => (t ? <ToolCell key={i}><Ico>{t}</Ico></ToolCell> : <ToolSep key={i} />))}</BrowserTools>
            <TextLine $h={20} $mt={16}><Ink $c="#ffc800">active</Ink></TextLine>
            <GroupRow><span /><Ink $c="#ffc800">shown</Ink><Ink $c="#ffc800">ok</Ink><Ink $c="#ffc800">group-name</Ink></GroupRow>
            {['g001-#references', 'g002-sketch-in-plane'].map((g, i) => (
              <GroupRow key={g} $band={!i}>
                <svg width="27" height="14" viewBox="0 0 27 14" fill="none" stroke="#ddd" strokeWidth="2">{i ? <><circle cx="13" cy="7" r="5" /><circle cx="13" cy="7" r="1.500" fill="#fff" stroke="none" /></> : null}</svg>
                <svg width="54" height="14" fill="none" stroke="#ccc" strokeWidth="2"><rect x="17" y="2" width="11" height="11" /><path d="M19.500 6L21.500 9L26 4" stroke="#fff" /></svg>
                <Ink $c="#20ff20">ok</Ink><Ink $c="#6868ff">{g}</Ink>
              </GroupRow>
            ))}
            <TextLine $h={20} $mt={10}>{' '}<Ink $c="#6868ff">show all</Ink>{' / '}<Ink $c="#6868ff">hide all</Ink></TextLine>
            <TextLine $h={20} $mt={10}>{' '}<Ink $c="#6868ff">line styles</Ink>{' / '}<Ink $c="#6868ff">view</Ink>{' / '}<Ink $c="#6868ff">configuration</Ink></TextLine>
            <ActiveLine />
          </BrowserText>
          <BrowserScroll><Chevron up /><Chevron /></BrowserScroll>
        </BrowserBody>
      </Browser>
      <Overlay $x={794} $y={761}><svg width="13" height="19"><path d="M1 0V15L4 12L7 18L9.500 17L7 11.500H12Z" fill="#fff" /></svg></Overlay>
    </Desktop>
  );
}
